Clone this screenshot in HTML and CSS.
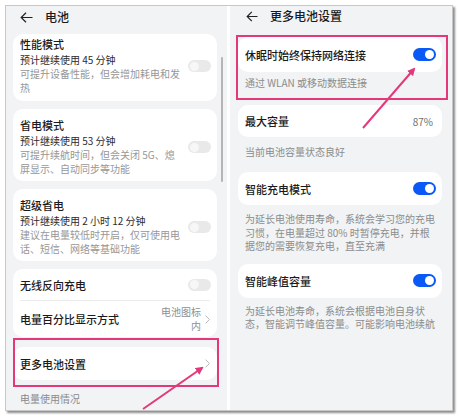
FILE: index.html
```html
<!DOCTYPE html>
<html lang="zh">
<head>
<meta charset="utf-8">
<link rel="stylesheet" href="styles.css">
</head>
<body>
<div class="frame">
  <div class="panel left">
    <div class="hdr">
      <svg class="back" width="13" height="11" viewBox="0 0 13 11"><path d="M12.5 5.5H1M6 0.8L1.2 5.5L6 10.2" fill="none" stroke="#222" stroke-width="1.2"/></svg>
      <span class="hdr-title">电池</span>
    </div>
    <div class="card mode first">
      <div class="mode-text">
        <div class="t">性能模式</div>
        <div class="s">预计继续使用 45 分钟</div>
        <div class="d">可提升设备性能，但会增加耗电和发<br>热</div>
      </div>
      <span class="tog"></span>
    </div>
    <div class="card mode">
      <div class="mode-text">
        <div class="t">省电模式</div>
        <div class="s">预计继续使用 53 分钟</div>
        <div class="d">可提升续航时间，但会关闭 5G、熄<br>屏显示、自动同步等功能</div>
      </div>
      <span class="tog"></span>
    </div>
    <div class="card mode">
      <div class="mode-text">
        <div class="t">超级省电</div>
        <div class="s">预计继续使用 2 小时 12 分钟</div>
        <div class="d">建议在电量较低时开启，仅可使用电<br>话、短信、网络等基础功能</div>
      </div>
      <span class="tog"></span>
    </div>
    <div class="card group">
      <div class="row r1">
        <span class="t">无线反向充电</span>
        <span class="tog"></span>
      </div>
      <div class="divider"></div>
      <div class="row r2">
        <span class="t">电量百分比显示方式</span>
        <span class="val-wrap">
          <span class="val">电池图标<br>内</span>
          <svg class="chev" width="5" height="9" viewBox="0 0 5 9"><path d="M0.6 0.6L4.4 4.5L0.6 8.4" fill="none" stroke="#b8b8b8" stroke-width="1"/></svg>
        </span>
      </div>
    </div>
    <div class="card single more">
      <span class="t">更多电池设置</span>
      <svg class="chev" width="5" height="9" viewBox="0 0 5 9"><path d="M0.6 0.6L4.4 4.5L0.6 8.4" fill="none" stroke="#b8b8b8" stroke-width="1"/></svg>
    </div>
    <div class="section">电量使用情况</div>
    <div class="scrollbar"></div>
  </div>

  <div class="panel right">
    <div class="hdr hdr-r">
      <svg class="back" width="12" height="11" viewBox="0 0 12 11"><path d="M11.5 5.5H1M5.8 0.8L1.2 5.5L5.8 10.2" fill="none" stroke="#222" stroke-width="1.2"/></svg>
      <span class="hdr-title">更多电池设置</span>
    </div>
    <div class="card single ca">
      <span class="t">休眠时始终保持网络连接</span>
      <span class="tog on"></span>
    </div>
    <div class="cap capa">通过 WLAN 或移动数据连接</div>
    <div class="card single cb">
      <span class="t">最大容量</span>
      <span class="pct">87%</span>
    </div>
    <div class="cap capb">当前电池容量状态良好</div>
    <div class="card single cc">
      <span class="t">智能充电模式</span>
      <span class="tog on"></span>
    </div>
    <div class="cap capc">为延长电池使用寿命，系统会学习您的充电<br>习惯，在电量超过 80% 时暂停充电，并根<br>据您的需要恢复充电，直至充满</div>
    <div class="card single cd">
      <span class="t">智能峰值容量</span>
      <span class="tog on"></span>
    </div>
    <div class="cap capd">为延长电池寿命，系统会根据电池自身状<br>态，智能调节峰值容量。可能影响电池续航</div>
  </div>

  <div class="hl hl-left"></div>
  <div class="hl hl-right"></div>
  <svg class="arrows" width="446" height="404" viewBox="0 0 446 404">
    <defs>
      <marker id="ah" markerWidth="8" markerHeight="8" refX="6" refY="4" orient="auto" markerUnits="userSpaceOnUse">
        <path d="M0 0L8 4L0 8Z" fill="#e3387a"/>
      </marker>
    </defs>
    <line x1="137" y1="403" x2="196" y2="362" stroke="#e3387a" stroke-width="2" marker-end="url(#ah)"/>
    <line x1="357" y1="122" x2="408" y2="63" stroke="#e3387a" stroke-width="2" marker-end="url(#ah)"/>
  </svg>
</div>
</body>
</html>
```
FILE: styles.css
```css
* { box-sizing: border-box; margin: 0; padding: 0; }
html, body { background: #fff; }
body {
  width: 459px;
  height: 417px;
  padding: 5px;
  overflow: hidden;
  font-family: "Noto Sans CJK SC", "Noto Sans", sans-serif;
  color: #1a1a1a;
}
.frame {
  position: relative;
  width: 448px;
  height: 406px;
  border: 1px solid #c8c8c8;
  box-shadow: 2px 2px 2px rgba(0, 0, 0, 0.45);
  background: #fff;
  display: flex;
  gap: 3px;
}
.panel {
  position: relative;
  height: 100%;
  overflow: hidden;
  background: #f1f3f5;
  display: flex;
  flex-direction: column;
}
.left { width: 221px; padding: 0 10px 0 7px; }
.right { width: 222px; padding: 0 10px 0 8px; }

.hdr {
  display: flex;
  align-items: center;
  height: 22px;
  padding-left: 7px;
  gap: 12px;
  flex-shrink: 0;
}
.hdr-r { height: 20px; padding-left: 8px; }
.hdr-title { font-size: 12px; font-weight: 500; line-height: 14px; }

.card {
  background: #fff;
  border-radius: 10px;
  flex-shrink: 0;
}
.t { font-size: 11px; font-weight: 500; line-height: 14px; white-space: nowrap; }

.mode {
  display: flex;
  align-items: center;
  justify-content: space-between;
  padding: 9px 6px 5px 7px;
  margin-top: 8px;
}
.mode.first { margin-top: 6px; padding-top: 3px; padding-bottom: 6px; }
.s { font-size: 10px; line-height: 14px; margin-top: 2px; color: #2b2b2b; white-space: nowrap; }
.d { font-size: 10px; line-height: 14px; color: #979797; white-space: nowrap; }

.tog {
  position: relative;
  width: 23px;
  height: 12px;
  border-radius: 6px;
  background: #e9e9ea;
  flex-shrink: 0;
}
.tog::after {
  content: "";
  position: absolute;
  left: 1.5px;
  top: 1.5px;
  width: 9px;
  height: 9px;
  border-radius: 50%;
  background: #f7f7f7;
}
.tog.on { background: #0a59f7; height: 13px; border-radius: 7px; }
.tog.on::after { left: auto; right: 2px; top: 2px; background: #fff; }

.group { margin-top: 8px; padding: 0 6px 0 7px; }
.row { display: flex; align-items: center; justify-content: space-between; }
.r1 { height: 31px; }
.r2 { height: 36px; padding-right: 1px; }
.divider { height: 1px; background: #ececec; margin-right: 1px; }
.val-wrap { display: flex; align-items: center; gap: 4px; }
.val { font-size: 10px; line-height: 14px; color: #8f8f8f; text-align: right; }

.single {
  display: flex;
  align-items: center;
  justify-content: space-between;
  padding: 0 6px 0 7px;
}
.more { margin-top: 10px; height: 33px; padding-right: 7px; }
.section {
  margin-top: 12px;
  padding-left: 7px;
  font-size: 10px;
  line-height: 14px;
  color: #8a8a8a;
}
.scrollbar {
  position: absolute;
  left: 215px;
  top: 51px;
  width: 2px;
  height: 125px;
  background: #b5b5b5;
  border-radius: 1px;
}

.ca { margin-top: 11px; height: 35px; }
.cb { margin-top: 15px; height: 32px; padding-right: 9px; }
.cc { margin-top: 13px; height: 33px; }
.cd { margin-top: 11px; height: 34px; }
.cap {
  padding-left: 7px;
  font-size: 10px;
  line-height: 14px;
  color: #8c8c8c;
  white-space: nowrap;
}
.capa { margin-top: 4px; }
.capb { margin-top: 8px; }
.capc { margin-top: 7px; line-height: 13.5px; }
.capd { margin-top: 6px; line-height: 13.5px; }
.pct { font-size: 10px; color: #6e6e6e; }

.hl {
  position: absolute;
  border: 2px solid #e3387a;
  pointer-events: none;
}
.hl-left { left: 7px; top: 332px; width: 206px; height: 49px; }
.hl-right { left: 230px; top: 29px; width: 212px; height: 65px; }
.arrows { position: absolute; left: 0; top: 0; pointer-events: none; }
```
